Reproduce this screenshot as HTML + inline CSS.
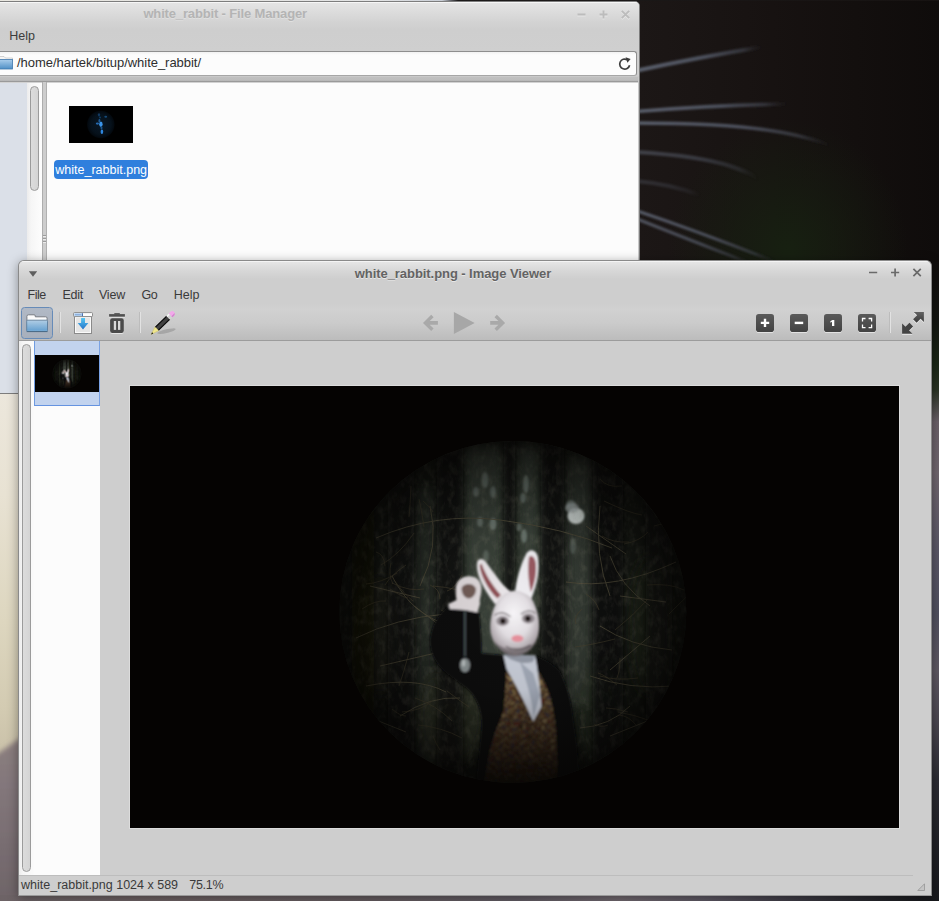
<!DOCTYPE html>
<html>
<head>
<meta charset="utf-8">
<title>white_rabbit</title>
<style>
*{margin:0;padding:0;box-sizing:border-box}
html,body{width:939px;height:901px;overflow:hidden;background:#151312;font-family:"Liberation Sans",sans-serif;font-size:13px;color:#3c3c3c}
.abs{position:absolute}
#desk{position:absolute;left:0;top:0;width:939px;height:901px;overflow:hidden}
/* ---------- wallpaper pieces ---------- */
#wp-tr{left:638px;top:0;width:301px;height:262px;background:
 radial-gradient(ellipse 120px 130px at 150px 250px,#172011 0%,rgba(23,32,17,0) 100%),
 linear-gradient(90deg,#1c1716 0%,#171211 45%,#0f0c0b 100%)}
#wp-left{left:0;top:393px;width:20px;height:508px;background:linear-gradient(180deg,#ece7dc 0%,#e8e2d3 20%,#ddd6bf 45%,#d3cbb2 62%,#c9c0a8 72%,#c2b8a2 100%)}
#wp-bot{left:0;top:895px;width:939px;height:6px;background:linear-gradient(90deg,#6d6366 0%,#6b6062 20%,#645b5f 40%,#605a62 55%,#70676e 66%,#5c5762 75%,#423f49 83%,#2b2b31 91%,#16171a 100%)}
#wp-right{left:930px;top:262px;width:9px;height:639px;background:linear-gradient(180deg,#100d0c 0%,#131511 9%,#1a2716 16%,#2a3324 20%,#6a6068 25%,#70666e 33%,#5a5766 45%,#50505f 55%,#5e5862 64%,#4a4650 72%,#2b2b32 81%,#17181c 100%)}
#wp-top{left:0;top:0;width:939px;height:1px;background:linear-gradient(90deg,#e9e7e0 0,#e2e3e4 380px,#c9ced6 442px,#55565c 452px,#1c1a1a 458px,#171312 100%)}

/* ---------- file manager ---------- */
#fm{left:-4px;top:1px;width:644px;height:393px;background:#cfcfcf;border:1px solid #7d7d7d;border-radius:5px 5px 0 0;overflow:hidden}
#fm .tb{left:0;top:0;width:100%;height:50px;background:linear-gradient(180deg,#f6f6f6 0,#f6f6f6 1px,#e4e4e4 1px,#d3d3d3 20px,#cecece 28px,#cfcfcf 100%)}
#fm .title{left:146.4px;top:4px;white-space:pre;letter-spacing:-0.15px;font-weight:bold;font-size:13px;color:#b4b4b4;text-shadow:0 1px 0 #e0e0e0}

#fm .menu{left:12.2px;top:26px;font-size:12.5px;line-height:16px;color:#3c3c3c;letter-spacing:0}
#fm .loc{left:-6px;top:49px;width:646px;height:25px;border:1px solid #8e8e8e;border-bottom-color:#a6a6a6;border-radius:3px;background:linear-gradient(180deg,#f2f2f2 0,#fcfcfc 3px,#fcfcfc 100%)}
#fm .path{left:20px;top:53.3px;font-size:13px;line-height:16px;color:#2e2e2e;letter-spacing:-0.03px;white-space:pre}
#fm .band{left:0;top:74px;width:100%;height:7px;background:linear-gradient(180deg,#d2d2d2 0,#c0c0c0 1px,#bdbdbd 4px,#b4b4b4 5px,#9a9a9a 5px,#9a9a9a 6px,#c4c4c4 6px,#e0e0e0 7px)}
#fm .side{left:0;top:81px;width:30px;height:312px;background:#dbe0e8}
#fm .trough{left:30px;top:81px;width:15px;height:312px;background:linear-gradient(90deg,#ececec 0,#f6f6f6 4px,#fdfdfd 100%)}
#fm .slider{left:33px;top:84px;width:9px;height:105px;border:1px solid #9b9b9b;border-radius:5px;background:linear-gradient(90deg,#dcdcdc,#d4d4d4)}
#fm .sep{left:45px;top:80px;width:5px;height:313px;background:#cdcdcd;border-left:1px solid #adadad;border-right:1px solid #b0b0b0}
#fm .content{left:50px;top:81px;width:591.3px;height:312px;background:#fcfcfc}
#fm .rborder{left:641.3px;top:74px;width:2px;height:320px;background:#c9c9c9}
#fm .thumb{left:72px;top:104px;width:64px;height:37px;background:#000;overflow:hidden}
#fm .label{left:57.2px;top:158px;width:94px;height:19px;border-radius:4px;background:#2f7fdd;color:#fff;font-size:12.5px;line-height:20.6px;text-align:center;white-space:pre;overflow:hidden}

/* ---------- image viewer ---------- */
#iv{left:18px;top:260px;width:914px;height:636px;background:#cecece;border:1px solid #8a8a8a;border-bottom-color:#9a9a9a;border-radius:6px 6px 0 0;overflow:hidden;box-shadow:0 2px 11px rgba(0,0,0,.38)}
#iv .tb{left:0;top:0;width:100%;height:80px;background:linear-gradient(180deg,#f4f4f4 0,#f4f4f4 1px,#e5e5e5 1px,#d8d8d8 9px,#cecece 18px,#cecece 42px,#d1d1d1 48px,#cbcbcb 62px,#bcbcbc 79px,#9c9c9c 79px,#9c9c9c 80px)}
#iv .title{left:335.8px;top:5px;font-weight:bold;font-size:13px;line-height:16px;color:#636363;white-space:pre;letter-spacing:-0.065px;text-shadow:0 1px 0 #e8e8e8}
#iv .mi{top:26px;font-size:12.5px;line-height:16px;color:#3a3a3a;white-space:pre}
#iv .tsep{top:51px;width:1px;height:21px;background:#e2e2e2;border-left:1px solid #bcbcbc;width:2px}
#iv .openbtn{left:2px;top:46px;width:32px;height:32px;border:1.3px solid #668bb8;border-radius:3.5px;background:linear-gradient(180deg,#b1b9c5,#a7afbc)}
#iv .zb{top:53px;width:18px;height:18px;border-radius:3px;background:linear-gradient(180deg,#565656,#424242);box-shadow:0 1px 0 rgba(255,255,255,.25)}
#iv .pane{left:0;top:80px;width:81px;height:535px;background:#fcfcfc}
#iv .trough{left:0;top:80px;width:15px;height:535px;background:linear-gradient(90deg,#ececec 0,#f6f6f6 4px,#fbfbfb 100%)}
#iv .slider{left:3px;top:83px;width:9px;height:528px;border:1px solid #9b9b9b;border-radius:5px;background:linear-gradient(90deg,#dcdcdc,#d4d4d4)}
#iv .sel{left:15px;top:80px;width:66px;height:65.3px;background:#c2d3ee;border:1px solid #6f9be0;border-right:1.6px solid #7aa2e4;border-bottom:1.5px solid #6593e0;border-top:none}
#iv .th{left:16px;top:94px;width:64px;height:37px;background:#050403;overflow:hidden}
#iv .img{left:110px;top:124px;width:771px;height:444px;border:1px solid #dcdcdc;background:#050302;overflow:hidden}
#iv .stline{left:0;top:614px;width:894px;height:1px;background:#bdbdbd}
#iv .status{left:2px;top:616px;font-size:12.5px;line-height:16px;color:#3a3a3a;white-space:pre}
</style>
</head>
<body>
<svg width="0" height="0" style="position:absolute">
 <defs>
  <radialGradient id="pbg" cx="384" cy="205" r="180" gradientUnits="userSpaceOnUse">
   <stop offset="0" stop-color="#2a2f27"/><stop offset=".4" stop-color="#21251f"/><stop offset=".7" stop-color="#181b16"/><stop offset="1" stop-color="#0f110e"/>
  </radialGradient>
  <radialGradient id="pvig" cx="382.800" cy="225.900" r="174" gradientUnits="userSpaceOnUse">
   <stop offset="0" stop-color="#000" stop-opacity="0"/><stop offset=".45" stop-color="#000" stop-opacity=".06"/><stop offset=".7" stop-color="#020201" stop-opacity=".3"/><stop offset=".88" stop-color="#030201" stop-opacity=".52"/><stop offset="1" stop-color="#040302" stop-opacity=".7"/>
  </radialGradient>
  <radialGradient id="mask" cx=".5" cy=".42" r=".62" fx=".48" fy=".35"><stop offset="0" stop-color="#f6f4f7"/><stop offset=".55" stop-color="#e4e0e4"/><stop offset=".85" stop-color="#b4acb1"/><stop offset="1" stop-color="#847c81"/></radialGradient>
  <filter id="b1" x="-20%" y="-20%" width="140%" height="140%"><feGaussianBlur stdDeviation="1"/></filter>
  <filter id="b3" x="-30%" y="-30%" width="160%" height="160%"><feGaussianBlur stdDeviation="3"/></filter>
  <filter id="b6" x="-30%" y="-30%" width="160%" height="160%"><feGaussianBlur stdDeviation="6"/></filter>
  <pattern id="vest" width="62" height="54" patternUnits="userSpaceOnUse" patternTransform="rotate(8)"><rect width="62" height="54" fill="#4a3826"/><circle cx="10" cy="10" r="9" fill="#a08a60"/><circle cx="38" cy="14" r="8" fill="#6a2c26"/><circle cx="52" cy="38" r="9" fill="#8a744c"/><circle cx="22" cy="36" r="8" fill="#3a3e58"/><circle cx="34" cy="46" r="5" fill="#b09868"/><circle cx="56" cy="8" r="5" fill="#2a2420"/><circle cx="6" cy="44" r="6" fill="#70442c"/><circle cx="26" cy="18" r="4" fill="#c0aa78"/></pattern>
  <filter id="nz" x="0" y="0" width="100%" height="100%"><feTurbulence type="fractalNoise" baseFrequency=".16 .1" numOctaves="3" seed="7"/><feColorMatrix values="0 0 0 0 .30  0 0 0 0 .29  0 0 0 0 .21  1.6 1.2 0 0 -1.3"/></filter>
  <linearGradient id="vshade" x1="0" y1="0" x2="0" y2="1"><stop offset="0" stop-color="#2a1c10" stop-opacity="0"/><stop offset=".45" stop-color="#1a100a" stop-opacity=".35"/><stop offset="1" stop-color="#0a0604" stop-opacity=".8"/></linearGradient>
  <filter id="vd" x="0" y="0" width="100%" height="100%"><feTurbulence type="fractalNoise" baseFrequency=".035" numOctaves="2" seed="3" result="t"/><feDisplacementMap in="SourceGraphic" in2="t" scale="60" xChannelSelector="R" yChannelSelector="G"/></filter>
  <clipPath id="vclip"><path d="M400 190L385 420C350 520 300 600 270 870L705 870C700 700 700 560 690 500C680 400 660 300 590 190Z"/></clipPath>
  <clipPath id="pclip"><ellipse cx="382.800" cy="225.900" rx="173.500" ry="171"/></clipPath>
 </defs>
 <symbol id="pic" viewBox="0 0 769 442">
  <rect width="769" height="442" fill="#050302"/>
  <g clip-path="url(#pclip)">
   <rect x="200" y="40" width="370" height="370" fill="url(#pbg)"/>
   <!-- light haze zones -->
   <g filter="url(#b6)">
    <rect x="333" y="60" width="42" height="230" fill="#454c42" opacity=".7"/>
    <rect x="386" y="60" width="26" height="170" fill="#454c42" opacity=".7"/>
    <rect x="436" y="70" width="28" height="250" fill="#3d443a" opacity=".7"/>
    <rect x="284" y="100" width="22" height="300" fill="#2e332b" opacity=".6"/>
    <ellipse cx="322" cy="330" rx="34" ry="50" fill="#35382a" opacity=".7"/>
    <ellipse cx="470" cy="330" rx="22" ry="50" fill="#343a2c" opacity=".6"/>
    <ellipse cx="250" cy="250" rx="26" ry="60" fill="#262921" opacity=".6"/>
    <ellipse cx="520" cy="240" rx="22" ry="70" fill="#262b22" opacity=".6"/>
   </g>
   <!-- trunks -->
   <g filter="url(#b3)" fill="#0c0e0a">
    <rect x="258" y="50" width="26" height="350" opacity=".75"/>
    <rect x="307" y="50" width="26" height="360" opacity=".8"/>
    <rect x="374" y="50" width="11" height="200" opacity=".8"/>
    <rect x="411" y="50" width="23" height="360" opacity=".8"/>
    <rect x="463" y="50" width="30" height="350" opacity=".85"/>
    <rect x="222" y="90" width="22" height="280" opacity=".6"/>
    <rect x="516" y="90" width="26" height="280" opacity=".65"/>
    
   </g>
   <!-- bokeh -->
   <g filter="url(#b1)" fill="#9aa8a2">
    <ellipse cx="355" cy="94" rx="3.500" ry="8" opacity=".45"/><ellipse cx="346" cy="106" rx="3" ry="5" opacity=".4"/>
    <ellipse cx="363" cy="106" rx="3" ry="6" opacity=".4"/><ellipse cx="396" cy="98" rx="3" ry="9" opacity=".5"/>
    <ellipse cx="393" cy="112" rx="3" ry="5" opacity=".45"/><ellipse cx="363" cy="138" rx="3.500" ry="6" opacity=".5"/>
    <ellipse cx="350" cy="136" rx="3" ry="5" opacity=".4"/><ellipse cx="394" cy="150" rx="3" ry="7" opacity=".5"/>
    <ellipse cx="389" cy="141" rx="2.500" ry="4" opacity=".4"/><ellipse cx="356" cy="170" rx="3" ry="6" opacity=".3"/>
    <ellipse cx="441" cy="119" rx="5" ry="5" opacity=".55"/>
    <ellipse cx="446" cy="130" rx="8.500" ry="8" fill="#e3ebe8" opacity=".95"/><ellipse cx="442" cy="122" rx="7" ry="5" fill="#a9b2b4" opacity=".7"/>
    <ellipse cx="443" cy="160" rx="3" ry="8" opacity=".3"/><ellipse cx="400" cy="190" rx="3" ry="6" opacity=".25"/>
   </g>
   <!-- branches -->
   <g fill="none" stroke="#4d4837" stroke-width="1" opacity=".85">
    <path d="M246 152q60-26 124-18t112 28"/><path d="M226 252q40-20 90-24"/><path d="M236 300q50-10 80 6"/>
    <path d="M436 196q50 8 110-20"/><path d="M460 290q40 14 84 10"/><path d="M470 240q30 20 72 24"/>
    <path d="M262 190q20 40 60 50M270 330q30-20 60-18M480 170q10 30 40 50M500 320q-20 20-50 22"/>
    <path d="M300 120q10 40-10 80M470 120q-6 50 10 90M284 220l40 30M520 250l-40 34"/>
    <path d="M240 200l50 12M250 280l60-14M236 330l40 16M480 350l50-20M490 210l46 6M456 140l40 28"/>
   </g>
   <rect x="210" y="50" width="350" height="350" filter="url(#nz)" opacity=".22"/>
   <path d="M489 329q10 1 17 10M474 115q25 12 38 14M262 323q8 7 14 7M488 326q17 3 30 8M485 244q19 -15 32 -30M317 305q16 12 22 16M303 350q3 8 7 14M246 166q8 2 9 14M524 140q19 -6 32 -3M456 208q10 6 13 16M303 200q26 2 40 10M445 261q16 -2 40 -8M264 194q11 15 19 21M261 177q-3 12 2 21M255 199q6 -10 21 -20M468 287q7 2 19 12M311 224q14 9 34 7M317 205q8 -2 15 -16M288 339q23 2 44 13M232 223q13 -9 24 -8M251 179q19 -11 33 -32M452 223q-9 8 -6 15M262 197q18 9 32 6M517 199q23 -2 37 5M293 115q8 7 10 11M470 93q7 9 22 7M494 158q16 -3 24 -12M236 198q15 -1 31 -11M472 150q11 7 27 6M476 322q9 0 22 4M260 203q12 8 18 9M279 266q-3 13 -10 34M470 290q16 5 38 2M285 312q21 7 37 23M464 338q7 4 14 1M490 272q0 13 -3 20M300 199q10 4 10 14M289 113q2 8 5 28M281 100q-1 21 -2 31M539 228q17 -18 33 -30M272 326q19 -1 30 -11" fill="none" stroke="#463f2e" stroke-width=".8" opacity=".75"/>
   <!-- figure -->
   <g filter="url(#b1)">
    <g transform="translate(310 254) scale(.16647)">
     <path d="M45-200C-10-150-50-90-60 0C-62 80-20 150 40 200L160 290C220 340 250 420 250 500C250 600 225 720 220 870L840 870C830 700 815 560 800 480C790 380 770 280 720 190C690 150 620 110 570 92L370 90L250 80C250 0 245-80 235-170Z" fill="#0b0c11"/>
     <path d="M400 190L385 420C350 520 300 600 270 870L705 870C700 700 700 560 690 500C680 400 660 300 590 190Z" fill="#4a3826"/><g clip-path="url(#vclip)"><rect x="240" y="160" width="500" height="730" fill="url(#vest)" filter="url(#vd)"/></g>
     <path d="M400 190L385 420C350 520 300 600 270 870L705 870C700 700 700 560 690 500C680 400 660 300 590 190Z" fill="url(#vshade)"/>
     <path d="M380 88L570 92C585 150 595 250 610 400L560 490C530 420 480 310 400 175Z" fill="#c9ced9"/>
     <path d="M480 130L560 200L600 330L560 470C560 380 520 250 480 130Z" fill="#8b93a2" opacity=".6"/>
     <path d="M380 88L570 92L560 130C500 150 440 130 380 88Z" fill="#7d8490" opacity=".7"/>
    </g>
    <g transform="translate(310 154) scale(.16647)">
     <!-- ears -->
     <path d="M330 385C290 330 215 230 222 140C225 110 255 105 275 130C320 190 370 270 425 310L400 370Z" fill="#ebe7ea"/>
     <path d="M238 150C243 215 290 300 345 352L366 330C320 280 268 200 250 142Z" fill="#8f5054"/>
     <path d="M450 320C455 260 480 150 520 80C540 50 575 55 588 100C600 170 590 250 548 355Z" fill="#f1eff3"/>
     <path d="M535 100C550 88 570 100 576 140C581 200 570 262 546 312C530 250 525 160 535 100Z" fill="#9a5a62"/>
     <!-- mask -->
     <path d="M335 385C310 430 295 500 305 560C315 620 360 672 440 692C520 692 570 640 590 570C605 500 590 420 550 350C520 320 470 300 440 305C400 310 360 340 335 385Z" fill="url(#mask)"/>
     
     
     <path d="M330 610C380 672 520 682 580 600C560 662 500 700 440 700C390 695 350 662 330 610Z" fill="#6e666a" opacity=".75"/>
     <ellipse cx="376" cy="487" rx="38" ry="30" fill="#7e767a" opacity=".8"/><ellipse cx="530" cy="472" rx="38" ry="30" fill="#7e767a" opacity=".8"/>
     <circle cx="378" cy="487" r="17" fill="#1e1414"/><circle cx="528" cy="472" r="17" fill="#1e1414"/>
     <path d="M328 452Q372 418 424 462M486 446Q530 408 574 440" stroke="#6e666a" stroke-width="7" fill="none"/>
     <ellipse cx="465" cy="592" rx="36" ry="21" fill="#e8929e"/>
     <path d="M395 640Q465 676 545 630" stroke="#554c50" stroke-width="7" fill="none"/>
     <!-- paw -->
     <path d="M95 300C90 250 130 215 180 218C230 220 255 260 248 310C245 340 235 360 240 385L225 435L150 420L60 415L48 385L100 360C95 340 95 320 95 300Z" fill="#ded8da"/>
     <path d="M130 290C135 260 200 250 215 290C220 320 200 352 170 352C145 346 128 320 130 290Z" fill="#5e4640" opacity=".85"/>
     <path d="M150 425V700" stroke="#66787a" stroke-width="7"/>
     <ellipse cx="150" cy="752" rx="30" ry="42" fill="#858c8d"/><ellipse cx="142" cy="740" rx="10" ry="20" fill="#c4caca" opacity=".8"/>
    </g>
   </g>
   <circle cx="382.800" cy="225.900" r="178" fill="url(#pvig)"/>
  </g>
 </symbol>
</svg>
<div id="desk">
 <div id="wp-tr" class="abs"></div>
 <div id="wp-left" class="abs"><svg width="20" height="508" style="display:block"><defs><linearGradient id="mv" x1="0" y1="0" x2="0" y2="1"><stop offset="0" stop-color="#8c807f"/><stop offset=".3" stop-color="#83777b"/><stop offset="1" stop-color="#6c6266"/></linearGradient><filter id="mvb" x="-50%" y="-5%" width="200%" height="110%"><feGaussianBlur stdDeviation="2.500"/></filter></defs><path d="M-10 366L30 338V520H-10z" fill="url(#mv)" filter="url(#mvb)"/></svg></div>
 <div id="wp-bot" class="abs"></div>
 <div id="wp-right" class="abs"></div>
 <div id="wp-top" class="abs"></div>
 <svg class="abs" style="left:638px;top:0" width="301" height="262" viewBox="638 0 301 262">
  <defs><filter id="wb" x="-5%" y="-60%" width="110%" height="220%"><feGaussianBlur stdDeviation="1.300"/></filter>
  <linearGradient id="wg1" x1="0" y1="0" x2="1" y2="0"><stop offset="0" stop-color="#5a5f6c"/><stop offset=".55" stop-color="#4c505c"/><stop offset=".85" stop-color="#3f414a" stop-opacity=".7"/><stop offset="1" stop-color="#2a2a30" stop-opacity="0"/></linearGradient></defs>
  <g fill="none" stroke="url(#wg1)" stroke-linecap="butt">
   <path d="M636 70.800Q700 57 762 47" stroke-width="4" filter="url(#wb)"/>
   <path d="M636 111.500Q720 105 788 104" stroke-width="3.600" filter="url(#wb)"/>
   <path d="M636 123Q740 123 790 134T828 149" stroke-width="3.600" filter="url(#wb)"/>
   <path d="M636 152Q700 156 730 166T758 181" stroke-width="4" opacity=".6" filter="url(#wb)"/>
   <path d="M636 181Q670 184 700 195" stroke-width="4" opacity=".35" filter="url(#wb)"/>
   <path d="M636 210.500Q700 232 776 262" stroke-width="3" opacity=".95" filter="url(#wb)"/>
   <path d="M636 218.500Q690 240 752 264" stroke-width="3" opacity=".85" filter="url(#wb)"/>
  </g>
 </svg>
 <div id="fm" class="abs">
  <div class="tb abs"></div>
  <div class="title abs">white_rabbit - File Manager</div>
  <svg class="abs" style="left:577.6px;top:5px" width="60" height="16" viewBox="0 0 60 16" fill="none" stroke-width="1.900">
   <g stroke="#e6e6e6" transform="translate(0 1)"><path d="M2.500 7.500h8"/><path d="M24.500 7.500h8M28.500 3.500v8"/><path d="M46.800 3.800l7.400 7.400M54.200 3.800l-7.400 7.400"/></g>
   <g stroke="#bcbcbc"><path d="M2.500 7.500h8"/><path d="M24.500 7.500h8M28.500 3.500v8"/><path d="M46.800 3.800l7.400 7.400M54.200 3.800l-7.400 7.400"/></g>
  </svg>
  <div class="menu abs">Help</div>
  <div class="loc abs"></div>
  <svg class="abs" style="left:-1px;top:52.2px" width="18" height="16" viewBox="0 0 18 16">
   <defs><linearGradient id="fg1" x1="0" y1="0" x2="0" y2="1"><stop offset="0" stop-color="#a9cdec"/><stop offset="1" stop-color="#4f8fc6"/></linearGradient></defs>
   <path d="M0 2.5h8l1.5 1.5h7v3H0z" fill="#f4f4f4" stroke="#b9b9b9" stroke-width=".6"/>
   <rect x="-2" y="5.5" width="18.5" height="9.5" fill="url(#fg1)" stroke="#3f78ad" stroke-width=".8"/>
  </svg>
  <div class="path abs">/home/hartek/bitup/white_rabbit/</div>
  <svg class="abs" style="left:620px;top:54px" width="16" height="16" viewBox="0 0 16 16" fill="none">
   <path d="M12.6 9.2a5 5 0 1 1-2.4-5.5" stroke="#3d3d3d" stroke-width="1.7"/>
   <path d="M8.6 1.2l5 1.9-3.2 3.6z" fill="#3d3d3d"/>
  </svg>
  <div class="band abs"></div>
  <div class="side abs"></div>
  <div class="trough abs"></div>
  <div class="slider abs"></div>
  <div class="content abs"></div>
  <div class="sep abs"></div>
  <div class="rborder abs"></div>
  <div class="abs" style="left:46px;top:233px;width:3px;height:1px;background:#9c9c9c;box-shadow:0 1px 0 #ececec,0 3px 0 #9c9c9c,0 4px 0 #ececec,0 6px 0 #9c9c9c,0 7px 0 #ececec"></div>
  <div class="thumb abs"><svg width="64" height="37" style="display:block"><defs><radialGradient id="tg"><stop offset="0" stop-color="#091826"/><stop offset=".7" stop-color="#06111b"/><stop offset=".92" stop-color="#03090f"/><stop offset="1" stop-color="#000"/></radialGradient><filter id="tb" x="-50%" y="-50%" width="200%" height="200%"><feGaussianBlur stdDeviation=".55"/></filter></defs><rect width="64" height="37" fill="#000"/><circle cx="31.800" cy="18.500" r="14.200" fill="url(#tg)"/><g filter="url(#tb)"><ellipse cx="31.900" cy="18.300" rx="1.700" ry="2.800" fill="#3a95ea"/><ellipse cx="32.900" cy="25.700" rx="1.300" ry="2.200" fill="#2f86de"/><ellipse cx="28.400" cy="17.600" rx="1.600" ry="1.100" fill="#2569ad"/><ellipse cx="30.400" cy="14.800" rx="1" ry="1.800" fill="#1f5a96"/><ellipse cx="30" cy="8.800" rx="1.200" ry="1.600" fill="#12395f"/><ellipse cx="36.700" cy="10.800" rx="1.400" ry="1" fill="#174a78"/><ellipse cx="31" cy="11.500" rx="1" ry="1" fill="#123a60"/><ellipse cx="32.500" cy="21.800" rx="1" ry="1.600" fill="#1c578f"/></g></svg></div>
  <div class="label abs">white_rabbit.png</div>
 </div>
 <div id="iv" class="abs">
  <div class="tb abs"></div>
  <svg class="abs" style="left:9px;top:9px" width="10" height="8" viewBox="0 0 10 8"><path d="M0.8 1.2h8.4L5 6.8z" fill="#5e5e5e"/></svg>
  <div class="title abs">white_rabbit.png - Image Viewer</div>
  <svg class="abs" style="left:848px;top:5.3px" width="60" height="14" viewBox="0 0 60 14" fill="none" stroke="#6a6a6a" stroke-width="1.7">
   <path d="M2 6.5h8.2"/><path d="M24 6.5h8.2M28.1 2.4v8.2"/><path d="M46.4 2.8l7.4 7.4M53.8 2.8l-7.4 7.4"/>
  </svg>
  <div class="mi abs" style="left:8.5px;letter-spacing:-0.5px">File</div>
  <div class="mi abs" style="left:43.4px;letter-spacing:-0.2px">Edit</div>
  <div class="mi abs" style="left:79.9px;letter-spacing:-0.15px">View</div>
  <div class="mi abs" style="left:122.5px;letter-spacing:-0.5px">Go</div>
  <div class="mi abs" style="left:154.7px;letter-spacing:0">Help</div>
  <div class="openbtn abs"></div>
  <div class="tsep abs" style="left:40px"></div>
  <div class="tsep abs" style="left:120px"></div>
  <div class="tsep abs" style="left:870px"></div>
  <svg class="abs" style="left:0;top:44px" width="912" height="36" viewBox="19 305 912 36">
   <defs>
    <linearGradient id="fold" x1="0" y1="0" x2="0" y2="1"><stop offset="0" stop-color="#dcebf6"/><stop offset=".1" stop-color="#a9c9e3"/><stop offset=".85" stop-color="#6da5d2"/><stop offset="1" stop-color="#7fb0d8"/></linearGradient>
    <linearGradient id="arr" x1="0" y1="0" x2="0" y2="1"><stop offset="0" stop-color="#55c6f2"/><stop offset="1" stop-color="#2573c8"/></linearGradient>
    <linearGradient id="zb" x1="0" y1="0" x2="0" y2="1"><stop offset="0" stop-color="#5a5a5a"/><stop offset="1" stop-color="#424242"/></linearGradient>
    <linearGradient id="fs" x1="0" y1="0" x2="0" y2="1"><stop offset="0" stop-color="#626262"/><stop offset="1" stop-color="#3a3a3a"/></linearGradient>
   </defs>
   <!-- folder -->
   <path d="M26.9 321v-4.6q0-1.6 1.6-1.6h5.6q1.2 0 1.2 1.2v0.8h10.4q1.4 0 1.4 1.4v2.8z" fill="#fbfbfb" stroke="#777b82" stroke-width="1"/>
   <rect x="26.7" y="320.2" width="20.8" height="11.3" rx="1" fill="url(#fold)" stroke="#5b7d9c" stroke-width=".9"/>
   <path d="M26.7 331.6h20.8" stroke="#4b6a86" stroke-width="1"/>
   <!-- save -->
   <rect x="74.5" y="316.5" width="17" height="17" fill="#e6e6e6" stroke="#8a8a8a" stroke-width="1"/>
   <rect x="75.5" y="317.5" width="15" height="15" fill="none" stroke="#fafafa" stroke-width="1"/>
   <rect x="73.6" y="312.6" width="18.9" height="4" rx=".8" fill="#fdfdfd" stroke="#8a8a8a" stroke-width="1"/>
   <rect x="74.2" y="313.2" width="8" height="2.9" fill="#b4d2f2"/>
   <rect x="75" y="314.2" width="6" height="1" fill="#86a8d6"/>
   <rect x="81.9" y="313.2" width="1" height="2.9" fill="#3b64a8"/>
   <path d="M81.1 318h3.9v5.1h3.4L83 329.5l-5.3-6.4h3.4z" fill="url(#arr)"/>
   <!-- trash -->
   <g fill="#e4e4e4"><rect x="109.1" y="315.1" width="15.8" height="2.6"/><rect x="110.1" y="319.2" width="13.7" height="14.7" rx="2.2"/></g>
   <rect x="114.3" y="313.1" width="5.5" height="1.4" fill="#555"/>
   <rect x="109.1" y="314.1" width="15.8" height="2.6" fill="#505050"/>
   <rect x="110.1" y="318.2" width="13.7" height="14.7" rx="2.2" fill="#4a4a4a"/>
   <rect x="113.8" y="321" width="2.3" height="8.9" fill="#d8d8d8"/>
   <rect x="118" y="321" width="2.3" height="8.9" fill="#d8d8d8"/>
   <!-- pencil -->
   <ellipse cx="166.5" cy="331.2" rx="9.5" ry="1.9" transform="rotate(-13 166.5 331.2)" fill="#8e8e8e" opacity=".55"/>
   <g transform="translate(151.1 334.4) rotate(-44.2)">
    <path d="M0 0L8.200 -2.600V2.600z" fill="#f1e88f" stroke="#cfc25a" stroke-width=".5"/>
    <path d="M0 0L2.200 -0.800V0.800z" fill="#111"/>
    <rect x="8.200" y="-2.600" width="15.800" height="5.200" fill="#414141"/>
    <rect x="8.200" y="-2.700" width="15.800" height="1.100" fill="#0a0a0a"/>
    <rect x="8.200" y="1.600" width="15.800" height="1.100" fill="#0a0a0a"/>
    <rect x="23.800" y="-2.600" width="3.400" height="5.200" fill="#d2d2d2"/>
    <rect x="23.800" y="-2.600" width="3.400" height="1.600" fill="#f6f6f6"/>
    <path d="M27.200 -2.600h2.300a2.600 2.600 0 0 1 0 5.200h-2.300z" fill="#f2a9ea"/>
    <path d="M27.200 1.100h4.500a2.600 2.600 0 0 1-2.200 1.500h-2.300z" fill="#d486cf"/>
   </g>
   <!-- nav -->
   <path d="M423 322.9l8.2-8.1 2.4 2.4-3.9 3.9h8.2v3.6h-8.2l3.9 3.9-2.4 2.4z" fill="#a9a9a9"/>
   <path d="M453.9 312v21.9l20.8-10.9z" fill="#a7a7a7"/>
   <path d="M505.1 322.9l-8.2-8.1-2.4 2.4 3.9 3.9h-8.2v3.6h8.2l-3.9 3.9 2.4 2.4z" fill="#a9a9a9"/>
   <!-- zoom buttons -->
   <g>
    <rect x="756" y="315" width="18" height="18" rx="2.8" fill="#e2e2e2"/><rect x="790" y="315" width="18" height="18" rx="2.8" fill="#e2e2e2"/><rect x="824" y="315" width="18" height="18" rx="2.8" fill="#e2e2e2"/><rect x="858" y="315" width="18" height="18" rx="2.8" fill="#e2e2e2"/>
    <rect x="756" y="314" width="18" height="18" rx="2.8" fill="url(#zb)"/><rect x="790" y="314" width="18" height="18" rx="2.8" fill="url(#zb)"/><rect x="824" y="314" width="18" height="18" rx="2.8" fill="url(#zb)"/><rect x="858" y="314" width="18" height="18" rx="2.8" fill="url(#zb)"/>
    <path d="M760.8 321.7h3v-3h2.4v3h3v2.4h-3v3h-2.4v-3h-3z" fill="#fff"/>
    <rect x="794.7" y="321.7" width="8.5" height="2.4" fill="#fff"/>
    <path d="M830.4 321.3l2-1.4h1.9v6.2h-2.3v-4.3l-1.6 0.9z" fill="#fff"/>
    <path d="M862.5 321.5v-3h3M868.6 318.5h3v3M871.6 324.6v3h-3M865.5 327.6h-3v-3" fill="none" stroke="#fff" stroke-width="1.3"/>
   </g>
   <!-- fullscreen -->
   <g fill="#ececec" transform="translate(0 1)">
    <path d="M913.8 311.9h10.1V322l-3.3-3.3-4 4-3.5-3.5 4-4z"/>
    <path d="M902.1 333.7V323.4l3.4 3.4 4-4 3.6 3.6-4 4 3.4 3.3z"/>
   </g>
   <path d="M913.8 311.9h10.1V322l-3.3-3.3-4 4-3.5-3.5 4-4z" fill="url(#fs)"/>
   <path d="M902.1 333.7V323.4l3.4 3.4 4-4 3.6 3.6-4 4 3.4 3.3z" fill="#444"/>
  </svg>
  <div class="pane abs"></div>
  <div class="trough abs"></div>
  <div class="slider abs"></div>
  <div class="sel abs"></div>
  <div class="th abs"><svg width="64" height="37" style="display:block" viewBox="0 0 769 442" preserveAspectRatio="none"><use href="#pic"/></svg></div>
  <div class="img abs"><svg width="769" height="442" style="display:block"><use href="#pic"/></svg></div>
  <div class="stline abs"></div>
  <div class="status abs">white_rabbit.png 1024 x 589</div><div class="status abs" style="left:170.3px;letter-spacing:-0.3px">75.1%</div>
  <svg class="abs" style="left:898px;top:622px" width="8" height="8" viewBox="0 0 8 8"><path d="M7.500 0.800v6.700h-6.700z" fill="#c4c4c4" stroke="#959595" stroke-width=".8"/></svg>
 </div>
</div>
</body>
</html>
